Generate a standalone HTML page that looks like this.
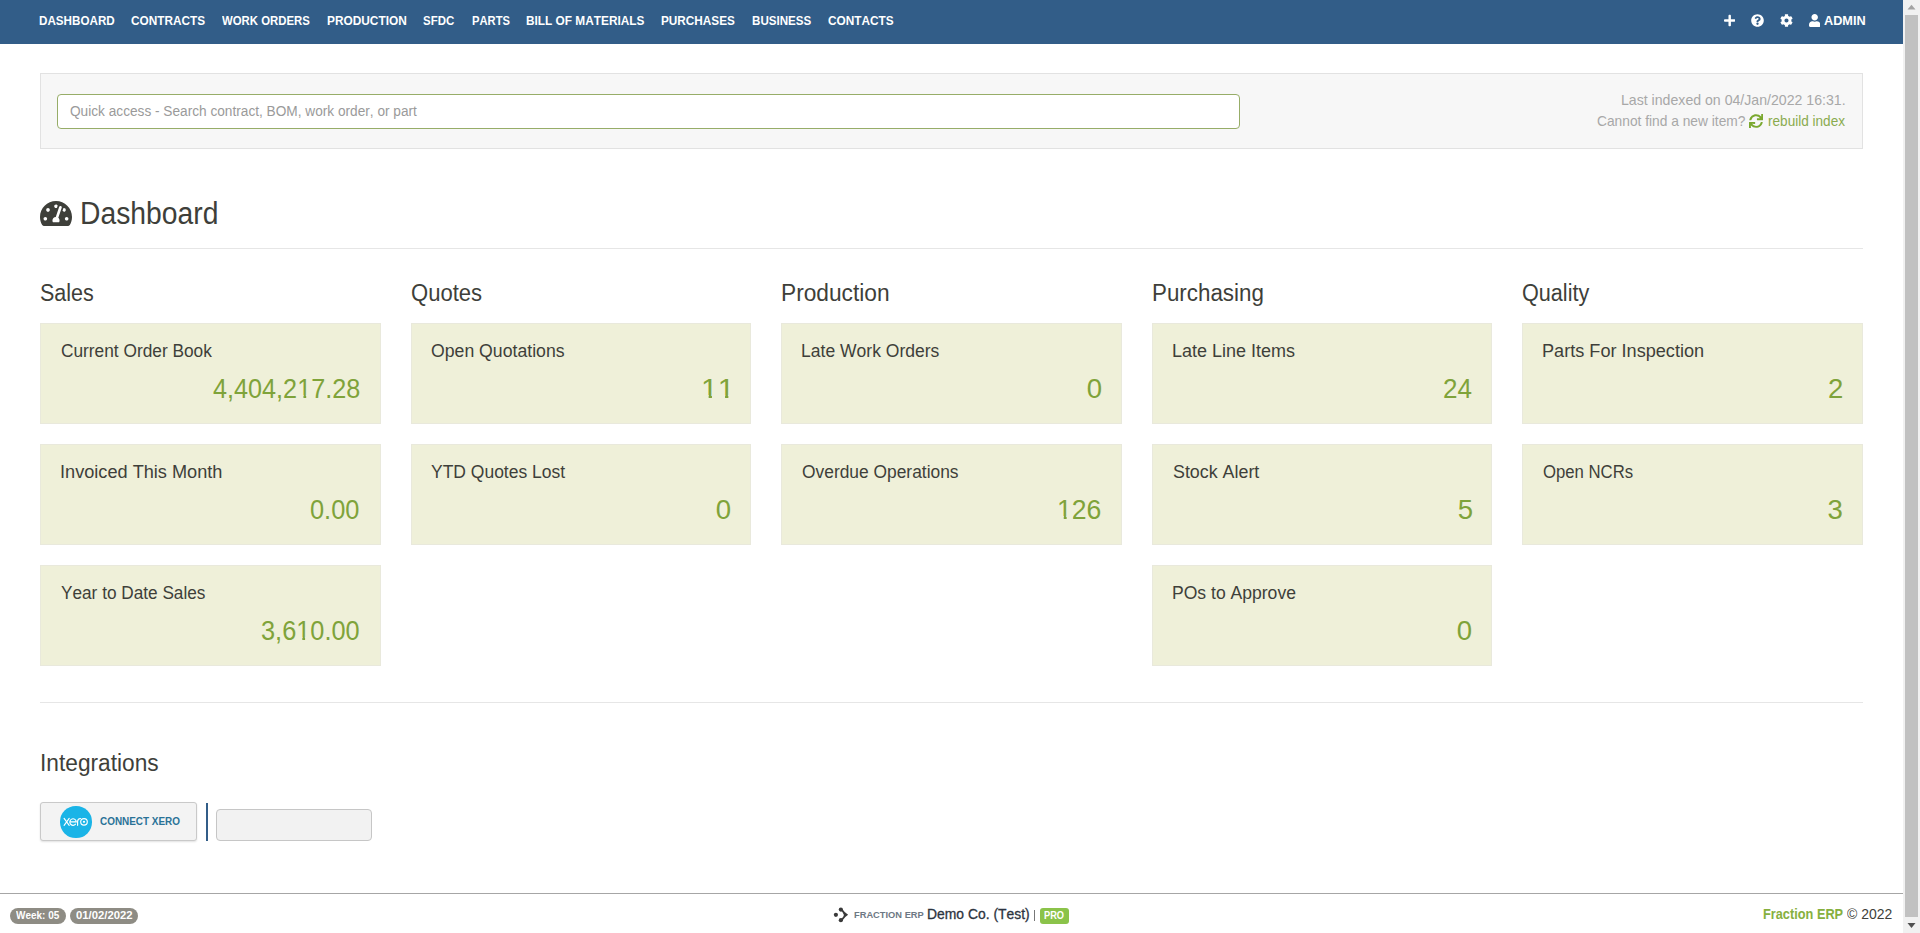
<!DOCTYPE html>
<html><head><meta charset="utf-8"><title>Dashboard - Fraction ERP</title>
<style>
*{box-sizing:border-box;margin:0;padding:0}
html,body{width:1920px;height:933px;overflow:hidden;background:#fff}
body{font-family:"Liberation Sans",sans-serif;color:#3e3f3a;position:relative}
.a{position:absolute}
.t{position:absolute;white-space:nowrap;transform-origin:0 0;font-kerning:none}
svg{position:absolute;display:block}
.d1{position:relative}
.d1::before,.d1::after{content:"";position:absolute;top:0.815em;height:0.11em;background:#eff0d9}
.d1::before{left:0.02em;width:0.226em}
.d1::after{left:0.345em;width:0.217em}
</style></head><body>
<div class="a" style="left:0;top:0;width:1903px;height:44px;background:#325d88"></div>
<svg style="left:1723.6px;top:14px" width="11.4" height="13" viewBox="0 0 448 512"><path fill="#fff" d="M416 208H272V64c0-17.67-14.33-32-32-32h-32c-17.67 0-32 14.33-32 32v144H32c-17.67 0-32 14.33-32 32v32c0 17.67 14.33 32 32 32h144v144c0 17.67 14.330 32 32 32h32c17.67 0 32-14.33 32-32V304h144c17.67 0 32-14.33 32-32v-32c0-17.67-14.33-32-32-32z"/></svg>
<svg style="left:1751px;top:14px" width="13" height="13" viewBox="0 0 512 512"><path fill="#fff" d="M504 256c0 136.997-111.043 248-248 248S8 392.997 8 256C8 119.083 119.043 8 256 8s248 111.083 248 248zM262.655 90c-54.497 0-89.255 22.957-116.549 63.758-3.536 5.286-2.353 12.415 2.715 16.258l34.699 26.31c5.205 3.947 12.621 3.008 16.665-2.122 17.864-22.658 30.113-35.797 57.303-35.797 20.429 0 45.698 13.148 45.698 32.958 0 14.976-12.363 22.667-32.534 33.976C247.128 238.528 216 254.941 216 296v4c0 6.627 5.373 12 12 12h56c6.627 0 12-5.373 12-12v-1.333c0-28.462 83.186-29.647 83.186-106.667 0-58.002-60.165-102-116.531-102zM256 338c-25.365 0-46 20.635-46 46 0 25.364 20.635 46 46 46s46-20.636 46-46c0-25.365-20.635-46-46-46z"/></svg>
<svg style="left:1780px;top:14px" width="13" height="13" viewBox="0 0 512 512"><path fill="#fff" d="M487.4 315.7l-42.6-24.6c4.3-23.2 4.3-47 0-70.2l42.6-24.6c4.900-2.800 7.100-8.600 5.500-14-11.100-35.600-30-67.800-54.700-94.600-3.800-4.100-10-5.100-14.800-2.300L380.8 110c-17.900-15.400-38.500-27.300-60.800-35.100V25.8c0-5.600-3.900-10.500-9.400-11.700-36.700-8.200-74.300-7.800-109.200 0-5.500 1.200-9.400 6.100-9.400 11.700V75c-22.200 7.900-42.800 19.800-60.800 35.100L88.7 85.5c-4.900-2.800-11-1.900-14.800 2.300-24.700 26.700-43.600 58.900-54.700 94.600-1.700 5.400.6 11.200 5.500 14L67.3 221c-4.300 23.200-4.300 47 0 70.200l-42.600 24.600c-4.900 2.800-7.100 8.600-5.500 14 11.100 35.600 30 67.800 54.700 94.600 3.800 4.100 10 5.100 14.800 2.300l42.600-24.600c17.900 15.400 38.500 27.300 60.800 35.100v49.200c0 5.600 3.900 10.500 9.400 11.700 36.700 8.200 74.300 7.800 109.200 0 5.500-1.200 9.400-6.100 9.400-11.700v-49.200c22.200-7.900 42.800-19.800 60.800-35.100l42.600 24.600c4.900 2.800 11 1.900 14.800-2.300 24.700-26.700 43.600-58.900 54.700-94.600 1.500-5.500-.7-11.300-5.600-14.100zM256 336c-44.100 0-80-35.900-80-80s35.900-80 80-80 80 35.900 80 80-35.900 80-80 80z"/></svg>
<svg style="left:1808.6px;top:14px" width="11.4" height="13" viewBox="0 0 448 512"><path fill="#fff" d="M224 256c70.7 0 128-57.3 128-128S294.7 0 224 0 96 57.3 96 128s57.3 128 128 128zm89.6 32h-16.7c-22.2 10.2-46.9 16-72.9 16s-50.6-5.8-72.9-16h-16.7C60.2 288 0 348.2 0 422.4V464c0 26.5 21.5 48 48 48h352c26.5 0 48-21.5 48-48v-41.6c0-74.2-60.2-134.4-134.4-134.4z"/></svg>

<div class="a" style="left:1903px;top:0;width:17px;height:933px;background:#f1f1f1"></div>
<svg style="left:1903px;top:0" width="17" height="17" viewBox="0 0 17 17"><path fill="#a3a3a3" d="M4.5 9.5h8L8.5 4.8z"/></svg>
<div class="a" style="left:1905px;top:15px;width:13px;height:902px;background:#c1c1c1"></div>
<svg style="left:1903px;top:916px" width="17" height="17" viewBox="0 0 17 17"><path fill="#505050" d="M4.5 7h8l-4 5z"/></svg>

<div class="a" style="left:40px;top:73px;width:1823px;height:76px;background:#f7f7f7;border:1px solid #e2e2e2"></div>
<div class="a" style="left:57px;top:94px;width:1183px;height:35px;background:#fff;border:1px solid #97ad68;border-radius:4px"></div>
<svg style="left:1748.9px;top:113.7px" width="14.1" height="14.1" viewBox="0 0 512 512"><path fill="#7aa82f" d="M440.65 12.57l4 82.77A247.16 247.16 0 0 0 255.83 8C134.73 8 33.91 94.92 12.29 209.82A12 12 0 0 0 24.09 224h49.05a12 12 0 0 0 11.670-9.260 175.910 175.910 0 0 1 317-56.940l-101.460-4.860a12 12 0 0 0-12.570 12v47.410a12 12 0 0 0 12 12H500a12 12 0 0 0 12-12V12a12 12 0 0 0-12-12h-47.370a12 12 0 0 0-11.980 12.570zM255.830 432a175.610 175.610 0 0 1-146-77.800l101.800 4.870a12 12 0 0 0 12.570-12v-47.400a12 12 0 0 0-12-12H12a12 12 0 0 0-12 12V500a12 12 0 0 0 12 12h47.350a12 12 0 0 0 12-12.600l-4.150-82.570A247.170 247.170 0 0 0 255.830 504c121.110 0 221.930-86.920 243.550-201.820a12 12 0 0 0-11.800-14.180h-49.050a12 12 0 0 0-11.670 9.260A175.860 175.860 0 0 1 255.830 432z"/></svg>

<svg style="left:40px;top:200.8px" width="32" height="24.9" viewBox="0 32 576 448"><path fill="#3e3f3a" d="M288 32C128.94 32 0 160.94 0 320c0 52.8 14.25 102.26 39.06 144.8 5.61 9.62 16.3 15.2 27.44 15.2h443c11.14 0 21.83-5.58 27.44-15.2C561.75 422.26 576 372.8 576 320c0-159.06-128.94-288-288-288zm0 64c14.71 0 26.58 10.13 30.32 23.65-1.11 2.26-2.64 4.23-3.45 6.67l-9.22 27.67c-5.13 3.49-10.97 6.01-17.64 6.01-17.67 0-32-14.33-32-32S270.33 96 288 96zM96 384c-17.67 0-32-14.33-32-32s14.33-32 32-32 32 14.33 32 32-14.33 32-32 32zm48-160c-17.67 0-32-14.33-32-32s14.33-32 32-32 32 14.33 32 32-14.33 32-32 32zm246.77-72.41l-61.33 184C343.13 347.33 352 364.54 352 384c0 11.72-3.38 22.55-8.88 32H232.88c-5.5-9.45-8.88-20.28-8.88-32 0-33.94 26.5-61.43 60.04-63.59l61.34-184.01c4.17-12.56 17.73-19.45 30.36-15.17 12.57 4.19 19.35 17.79 15.17 30.36zm14.66 57.2l15.52-46.55c3.47-1.29 7.13-2.230 11.050-2.230 17.670 0 32 14.330 32 32s-14.330 32-32 32c-11.380 0-20.890-6.270-26.570-15.220zM480 384c-17.67 0-32-14.33-32-32s14.33-32 32-32 32 14.33 32 32-14.33 32-32 32z"/></svg>
<div class="a" style="left:40px;top:248px;width:1823px;height:1px;background:#e6e6e6"></div>

<div class="a" style="left:40px;top:323px;width:340.6px;height:101px;background:#eff0d9;border:1px solid #e9e9dc"></div>
<div class="a" style="left:40px;top:444px;width:340.6px;height:101px;background:#eff0d9;border:1px solid #e9e9dc"></div>
<div class="a" style="left:40px;top:565px;width:340.6px;height:101px;background:#eff0d9;border:1px solid #e9e9dc"></div>
<div class="a" style="left:410.6px;top:323px;width:340.6px;height:101px;background:#eff0d9;border:1px solid #e9e9dc"></div>
<div class="a" style="left:410.6px;top:444px;width:340.6px;height:101px;background:#eff0d9;border:1px solid #e9e9dc"></div>
<div class="a" style="left:781.2px;top:323px;width:340.6px;height:101px;background:#eff0d9;border:1px solid #e9e9dc"></div>
<div class="a" style="left:781.2px;top:444px;width:340.6px;height:101px;background:#eff0d9;border:1px solid #e9e9dc"></div>
<div class="a" style="left:1151.8px;top:323px;width:340.6px;height:101px;background:#eff0d9;border:1px solid #e9e9dc"></div>
<div class="a" style="left:1151.8px;top:444px;width:340.6px;height:101px;background:#eff0d9;border:1px solid #e9e9dc"></div>
<div class="a" style="left:1151.8px;top:565px;width:340.6px;height:101px;background:#eff0d9;border:1px solid #e9e9dc"></div>
<div class="a" style="left:1522.4px;top:323px;width:340.6px;height:101px;background:#eff0d9;border:1px solid #e9e9dc"></div>
<div class="a" style="left:1522.4px;top:444px;width:340.6px;height:101px;background:#eff0d9;border:1px solid #e9e9dc"></div>

<div class="a" style="left:40px;top:702px;width:1823px;height:1px;background:#e6e6e6"></div>

<div class="a" style="left:40px;top:802px;width:157px;height:39px;background:#f3f3f3;border:1px solid #c9c9c9;border-radius:3px;box-shadow:0 1px 2px rgba(0,0,0,.12)"></div>
<div class="a" style="left:60px;top:806px;width:31.5px;height:31.5px;border-radius:50%;background:#1ab4e7"></div>
<svg style="left:60px;top:806px" width="31.5" height="31.5" viewBox="0 0 31.5 31.5"><g fill="none" stroke="#fff" stroke-width="1.15" stroke-linecap="round"><path d="M4.1 12.4L9.2 19.3M9.2 12.4L4.1 19.3"/><path d="M9.9 15.9H16.3A3.25 3.25 0 1 0 15.5 18.2"/><path d="M17.6 19.3V15.6A3.1 3.1 0 0 1 20.5 12.5"/><circle cx="24" cy="15.85" r="3.3"/></g><circle cx="24" cy="15.85" r="1.1" fill="#fff"/></svg>
<div class="a" style="left:206px;top:803px;width:2.2px;height:38px;background:#325d88"></div>
<div class="a" style="left:216px;top:809px;width:156px;height:32px;background:#f2f2f2;border:1px solid #c6c6c6;border-radius:4px"></div>

<div class="a" style="left:0;top:893px;width:1903px;height:1px;background:#a6a6a6"></div>
<div class="a" style="left:10px;top:908px;width:56px;height:16px;border-radius:8px;background:#8e8c84"></div>
<div class="a" style="left:70px;top:908px;width:68px;height:16px;border-radius:8px;background:#8e8c84"></div>
<svg style="left:830px;top:904px" width="22" height="22" viewBox="0 0 22 22"><g fill="#3a3a3a"><circle cx="5.9" cy="10.85" r="2.1"/><circle cx="10.85" cy="5.6" r="2.1"/><circle cx="10.85" cy="16.2" r="2.1"/><path d="M11.6 4.3Q15 9 18.1 10.85Q15 12.7 11.6 17.4L10.1 15.8Q17.7 10.85 10.1 5.9z"/></g></svg>
<div class="a" style="left:1034px;top:910px;width:1px;height:11px;background:#777"></div>
<div class="a" style="left:1040px;top:908px;width:29px;height:16px;border-radius:3px;background:#8bc34a"></div>
<div class="t" id="nav0" style="left:38.60px;top:13.00px;font-size:13.00px;line-height:16px;font-weight:bold;transform:scaleX(0.8964);color:#fff;">DASHBOARD</div>
<div class="t" id="nav1" style="left:131.00px;top:13.00px;font-size:13.00px;line-height:16px;font-weight:bold;transform:scaleX(0.9080);color:#fff;">CONTRACTS</div>
<div class="t" id="nav2" style="left:221.90px;top:13.00px;font-size:13.00px;line-height:16px;font-weight:bold;transform:scaleX(0.8747);color:#fff;">WORK ORDERS</div>
<div class="t" id="nav3" style="left:326.90px;top:13.00px;font-size:13.00px;line-height:16px;font-weight:bold;transform:scaleX(0.9126);color:#fff;">PRODUCTION</div>
<div class="t" id="nav4" style="left:423.00px;top:13.00px;font-size:13.00px;line-height:16px;font-weight:bold;transform:scaleX(0.8819);color:#fff;">SFDC</div>
<div class="t" id="nav5" style="left:471.50px;top:13.00px;font-size:13.00px;line-height:16px;font-weight:bold;transform:scaleX(0.8617);color:#fff;">PARTS</div>
<div class="t" id="nav6" style="left:526.00px;top:13.00px;font-size:13.00px;line-height:16px;font-weight:bold;transform:scaleX(0.9109);color:#fff;">BILL OF MATERIALS</div>
<div class="t" id="nav7" style="left:660.60px;top:13.00px;font-size:13.00px;line-height:16px;font-weight:bold;transform:scaleX(0.9054);color:#fff;">PURCHASES</div>
<div class="t" id="nav8" style="left:751.70px;top:13.00px;font-size:13.00px;line-height:16px;font-weight:bold;transform:scaleX(0.8924);color:#fff;">BUSINESS</div>
<div class="t" id="nav9" style="left:827.50px;top:13.00px;font-size:13.00px;line-height:16px;font-weight:bold;transform:scaleX(0.9098);color:#fff;">CONTACTS</div>
<div class="t" id="nav10" style="left:1823.75px;top:13.00px;font-size:13.00px;line-height:16px;font-weight:bold;transform:scaleX(0.9771);color:#fff;">ADMIN</div>
<div class="t" id="ph" style="left:70.30px;top:102.80px;font-size:14.00px;line-height:17px;transform:scaleX(0.9756);color:#9a9a9a;">Quick access - Search contract, BOM, work order, or part</div>
<div class="t" id="idx1" style="left:1621.13px;top:92.00px;font-size:14.50px;line-height:17px;transform:scaleX(0.9740);color:#a8a8a8;">Last indexed on 04/Jan/2022 16:31.</div>
<div class="t" id="idx2" style="left:1597.00px;top:112.50px;font-size:14.50px;line-height:17px;transform:scaleX(0.9494);color:#a8a8a8;">Cannot find a new item?</div>
<div class="t" id="idx3" style="left:1767.50px;top:112.50px;font-size:14.50px;line-height:17px;transform:scaleX(0.9365);color:#8aab4f;">rebuild index</div>
<div class="t" id="title" style="left:79.78px;top:195.00px;font-size:31.00px;line-height:37px;transform:scaleX(0.9123);color:#3e3f3a;">Dashboard</div>
<div class="t" id="h0" style="left:39.88px;top:278.80px;font-size:23.30px;line-height:28px;transform:scaleX(0.9236);color:#3e3f3a;">Sales</div>
<div class="t" id="h1" style="left:410.75px;top:278.80px;font-size:23.30px;line-height:28px;transform:scaleX(0.9467);color:#3e3f3a;">Quotes</div>
<div class="t" id="h2" style="left:781.32px;top:278.80px;font-size:23.30px;line-height:28px;transform:scaleX(0.9751);color:#3e3f3a;">Production</div>
<div class="t" id="h3" style="left:1152.04px;top:278.80px;font-size:23.30px;line-height:28px;transform:scaleX(0.9599);color:#3e3f3a;">Purchasing</div>
<div class="t" id="h4" style="left:1522.37px;top:278.80px;font-size:23.30px;line-height:28px;transform:scaleX(0.9282);color:#3e3f3a;">Quality</div>
<div class="t" id="integ" style="left:39.95px;top:748.70px;font-size:23.30px;line-height:28px;transform:scaleX(0.9749);color:#3e3f3a;">Integrations</div>
<div class="t" id="lb0" style="left:61.00px;top:340.00px;font-size:18.30px;line-height:22px;transform:scaleX(0.9459);color:#3e3f3a;">Current Order Book</div>
<div class="t" id="lb1" style="left:431.00px;top:340.00px;font-size:18.30px;line-height:22px;transform:scaleX(0.9661);color:#3e3f3a;">Open Quotations</div>
<div class="t" id="lb2" style="left:801.14px;top:340.00px;font-size:18.30px;line-height:22px;transform:scaleX(0.9593);color:#3e3f3a;">Late Work Orders</div>
<div class="t" id="lb3" style="left:1171.52px;top:340.00px;font-size:18.30px;line-height:22px;transform:scaleX(0.9842);color:#3e3f3a;">Late Line Items</div>
<div class="t" id="lb4" style="left:1542.41px;top:340.00px;font-size:18.30px;line-height:22px;transform:scaleX(0.9912);color:#3e3f3a;">Parts For Inspection</div>
<div class="t" id="lb5" style="left:60.01px;top:461.00px;font-size:18.30px;line-height:22px;transform:scaleX(0.9927);color:#3e3f3a;">Invoiced This Month</div>
<div class="t" id="lb6" style="left:431.00px;top:461.00px;font-size:18.30px;line-height:22px;transform:scaleX(0.9562);color:#3e3f3a;">YTD Quotes Lost</div>
<div class="t" id="lb7" style="left:802.10px;top:461.00px;font-size:18.30px;line-height:22px;transform:scaleX(0.9509);color:#3e3f3a;">Overdue Operations</div>
<div class="t" id="lb8" style="left:1172.50px;top:461.00px;font-size:18.30px;line-height:22px;transform:scaleX(0.9767);color:#3e3f3a;">Stock Alert</div>
<div class="t" id="lb9" style="left:1543.40px;top:461.00px;font-size:18.30px;line-height:22px;transform:scaleX(0.9146);color:#3e3f3a;">Open NCRs</div>
<div class="t" id="lb10" style="left:61.00px;top:582.00px;font-size:18.30px;line-height:22px;transform:scaleX(0.9413);color:#3e3f3a;">Year to Date Sales</div>
<div class="t" id="lb11" style="left:1171.54px;top:582.00px;font-size:18.30px;line-height:22px;transform:scaleX(0.9603);color:#3e3f3a;">POs to Approve</div>
<div class="t" id="nm0" style="left:212.70px;top:372.00px;font-size:27.60px;line-height:33px;transform:scaleX(0.9137);color:#7fa33a;">4,404,2<span class="d1">1</span>7.28</div>
<div class="t" id="nm1" style="left:700.96px;top:372.00px;font-size:27.60px;line-height:33px;transform:scaleX(1.0938);color:#7fa33a;"><span class="d1">1</span><span class="d1">1</span></div>
<div class="t" id="nm2" style="left:1086.70px;top:372.00px;font-size:27.60px;line-height:33px;color:#7fa33a;">0</div>
<div class="t" id="nm3" style="left:1443.46px;top:372.00px;font-size:27.60px;line-height:33px;transform:scaleX(0.9439);color:#7fa33a;">24</div>
<div class="t" id="nm4" style="left:1828.00px;top:372.00px;font-size:27.60px;line-height:33px;color:#7fa33a;">2</div>
<div class="t" id="nm5" style="left:310.33px;top:493.00px;font-size:27.60px;line-height:33px;transform:scaleX(0.9196);color:#7fa33a;">0.00</div>
<div class="t" id="nm6" style="left:715.70px;top:493.00px;font-size:27.60px;line-height:33px;color:#7fa33a;">0</div>
<div class="t" id="nm7" style="left:1056.94px;top:493.00px;font-size:27.60px;line-height:33px;transform:scaleX(0.9643);color:#7fa33a;"><span class="d1">1</span>26</div>
<div class="t" id="nm8" style="left:1457.70px;top:493.00px;font-size:27.60px;line-height:33px;color:#7fa33a;">5</div>
<div class="t" id="nm9" style="left:1827.50px;top:493.00px;font-size:27.60px;line-height:33px;color:#7fa33a;">3</div>
<div class="t" id="nm10" style="left:261.08px;top:614.00px;font-size:27.60px;line-height:33px;transform:scaleX(0.9183);color:#7fa33a;">3,6<span class="d1">1</span>0.00</div>
<div class="t" id="nm11" style="left:1456.70px;top:614.00px;font-size:27.60px;line-height:33px;color:#7fa33a;">0</div>
<div class="t" id="cx" style="left:100.00px;top:814.30px;font-size:11.60px;line-height:14px;font-weight:bold;transform:scaleX(0.8567);color:#2a7297;">CONNECT XERO</div>
<div class="t" id="wk" style="left:16.25px;top:907.80px;font-size:11.50px;line-height:14px;font-weight:bold;transform:scaleX(0.8670);color:#fff;">Week: 05</div>
<div class="t" id="dt" style="left:75.80px;top:907.80px;font-size:11.50px;line-height:14px;font-weight:bold;transform:scaleX(0.9832);color:#fff;">01/02/2022</div>
<div class="t" id="fe" style="left:854.00px;top:910.40px;font-size:9.00px;line-height:11px;font-weight:bold;transform:scaleX(1.0334);color:#6d7884;">FRACTION ERP</div>
<div class="t" id="demo" style="left:927.03px;top:905.80px;font-size:14.30px;line-height:17px;transform:scaleX(0.9721);color:#2c3440;-webkit-text-stroke:0.3px #2c3440;">Demo Co. (Test)</div>
<div class="t" id="pro" style="left:1044.30px;top:908.60px;font-size:11.00px;line-height:13px;font-weight:bold;transform:scaleX(0.8402);color:#fff;">PRO</div>
<div class="t" id="ferp" style="left:1763.00px;top:906.00px;font-size:14.20px;line-height:17px;font-weight:bold;transform:scaleX(0.8994);color:#86b03e;">Fraction ERP</div>
<div class="t" id="copy" style="left:1847.20px;top:906.00px;font-size:14.20px;line-height:17px;transform:scaleX(0.9834);color:#3e3f3a;">&copy; 2022</div>
</body></html>
